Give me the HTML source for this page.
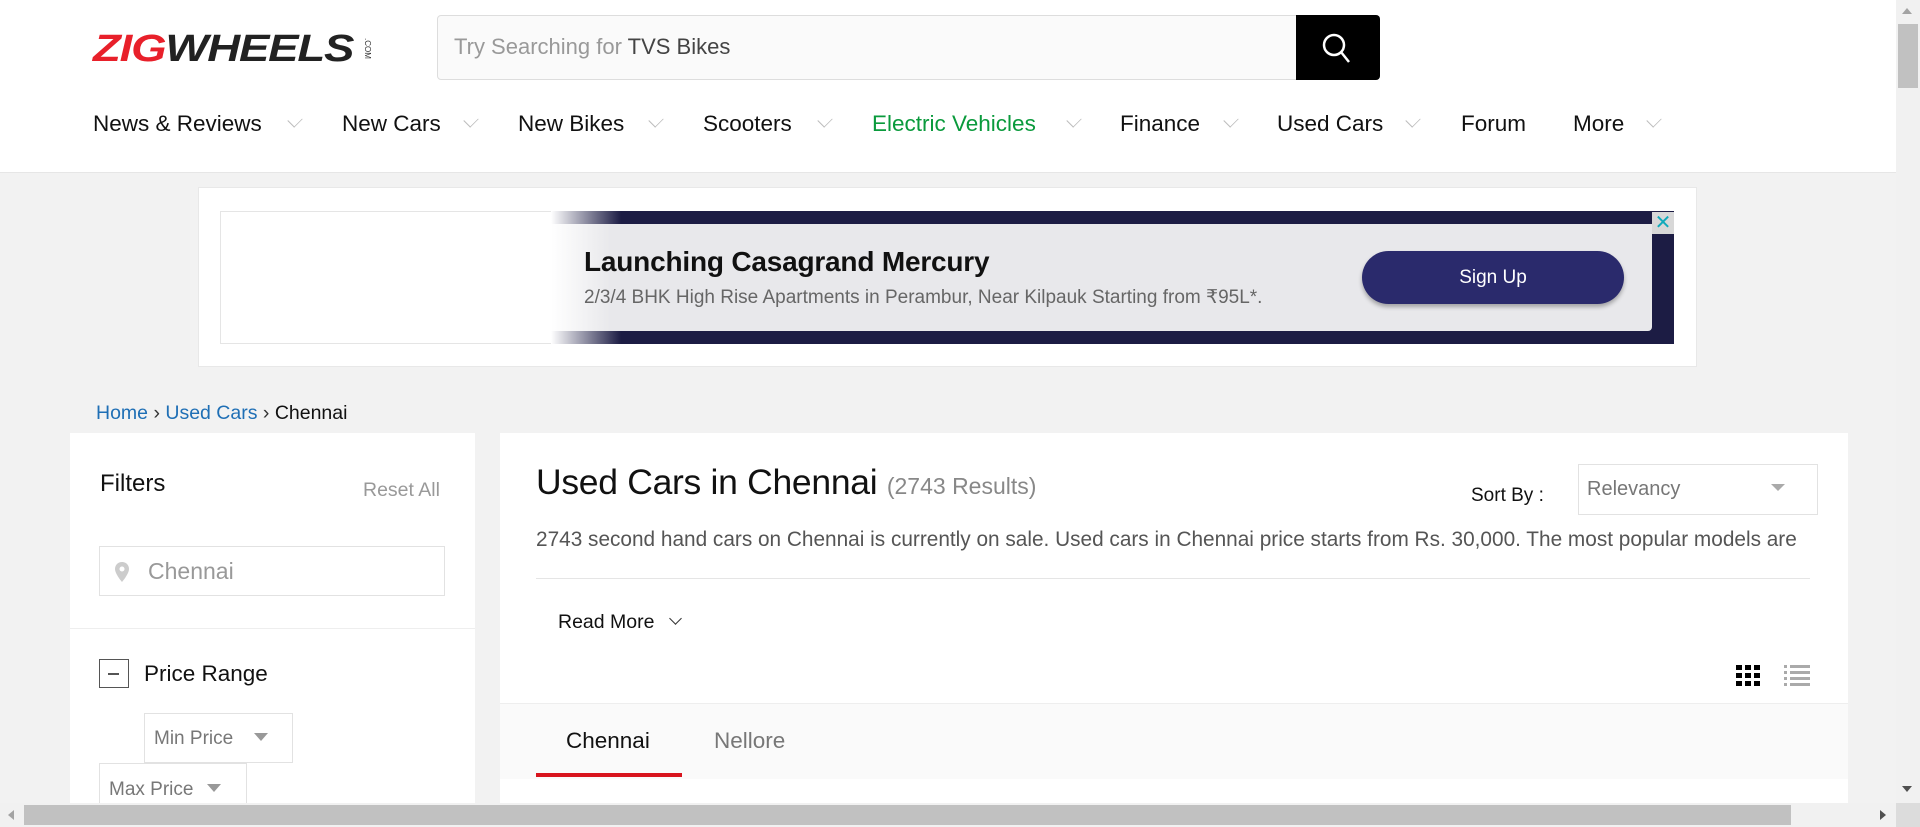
<!DOCTYPE html>
<html><head><meta charset="utf-8"><style>
*{margin:0;padding:0;box-sizing:border-box}
body{width:1920px;height:827px;overflow:hidden;background:#f2f2f2;font-family:"Liberation Sans",Arial,sans-serif;position:relative;color:#000}
.a{position:absolute;white-space:nowrap}
.hdr{position:absolute;left:0;top:0;width:1896px;height:173px;background:#fff;border-bottom:1px solid #e6e6e6}
.nav{font-size:22.5px;color:#111;top:111px}
.chev{position:absolute;top:114px;width:12px;height:12px;border-right:1.5px solid #bbb;border-bottom:1.5px solid #bbb;transform:rotate(45deg) scaleX(.8)}
</style></head><body>
<div class="hdr"></div>
<!-- logo -->
<div class="a" style="left:93px;top:28px;font-size:38px;font-weight:bold;font-style:italic;letter-spacing:-1px;transform:scaleX(1.2);transform-origin:left"><span style="color:#e8202a">ZIG</span><span style="color:#222">WHEELS</span></div>
<div class="a" style="left:372px;top:38px;font-size:8px;color:#333;transform:rotate(90deg);transform-origin:left top">.COM</div>
<!-- search -->
<div class="a" style="left:437px;top:15px;width:943px;height:65px;background:#fafafa;border:1px solid #ddd;border-radius:4px"></div>
<div class="a" style="left:454px;top:34px;font-size:22px;color:#999">Try Searching for <span style="color:#444">TVS Bikes</span></div>
<div class="a" style="left:1296px;top:15px;width:84px;height:65px;background:#000;border-radius:0 4px 4px 0"></div>
<svg class="a" style="left:1318px;top:29px" width="38" height="38" viewBox="0 0 38 38"><circle cx="16" cy="16" r="10" stroke="#fff" stroke-width="2.5" fill="none"/><line x1="23" y1="23" x2="31" y2="33" stroke="#fff" stroke-width="2.5"/></svg>
<!-- nav -->
<div class="a nav" style="left:93px">News &amp; Reviews</div><div class="chev" style="left:289px"></div>
<div class="a nav" style="left:342px">New Cars</div><div class="chev" style="left:465px"></div>
<div class="a nav" style="left:518px">New Bikes</div><div class="chev" style="left:650px"></div>
<div class="a nav" style="left:703px">Scooters</div><div class="chev" style="left:819px"></div>
<div class="a nav" style="left:872px;color:#0a9a3c">Electric Vehicles</div><div class="chev" style="left:1068px"></div>
<div class="a nav" style="left:1120px">Finance</div><div class="chev" style="left:1225px"></div>
<div class="a nav" style="left:1277px">Used Cars</div><div class="chev" style="left:1407px"></div>
<div class="a nav" style="left:1461px">Forum</div>
<div class="a nav" style="left:1573px">More</div><div class="chev" style="left:1648px"></div>
<!-- ad -->
<div class="a" style="left:198px;top:187px;width:1499px;height:180px;background:#fff;border:1px solid #e8e8e8"></div>
<div class="a" style="left:220px;top:211px;width:1454px;height:133px;background:#fff;border:1px solid #e5e5e5"></div>
<div class="a" style="left:551px;top:211px;width:1123px;height:133px;background:linear-gradient(90deg,#fff 0,#1c1c44 70px,#1c1c44 100%)"></div>
<div class="a" style="left:551px;top:224px;width:1101px;height:107px;background:linear-gradient(90deg,#fff 0,#e8e8eb 60px);border-radius:0 0 4px 0"></div>
<div class="a" style="left:1652px;top:212px;width:22px;height:22px;background:#d8d8d8;color:#1ab;font-size:20px;text-align:center;line-height:22px">✕</div>
<div class="a" style="left:584px;top:246px;font-size:28px;font-weight:bold;color:#111;letter-spacing:-.2px">Launching Casagrand Mercury</div>
<div class="a" style="left:584px;top:286px;font-size:19px;color:#666">2/3/4 BHK High Rise Apartments in Perambur, Near Kilpauk Starting from ₹95L*.</div>
<div class="a" style="left:1362px;top:251px;width:262px;height:53px;background:#2a2a6c;border-radius:27px;color:#fff;font-size:19px;text-align:center;line-height:53px;box-shadow:0 3px 4px rgba(0,0,0,.3)">Sign Up</div>
<!-- breadcrumb -->
<div class="a" style="left:96px;top:402px;font-size:19.5px;color:#1f6fb5">Home <span style="color:#333">›</span> Used Cars <span style="color:#333">›</span> <span style="color:#111">Chennai</span></div>
<!-- left panel -->
<div class="a" style="left:70px;top:433px;width:405px;height:370px;background:#fff"></div>
<div class="a" style="left:100px;top:470px;font-size:24px;color:#111">Filters</div>
<div class="a" style="left:363px;top:479px;font-size:19.5px;color:#999">Reset All</div>
<div class="a" style="left:99px;top:546px;width:346px;height:50px;border:1px solid #e2e2e2"></div>
<svg class="a" style="left:114px;top:561px" width="16" height="22" viewBox="0 0 16 22"><path d="M8 1C4 1 1 4 1 8c0 5 7 13 7 13s7-8 7-13c0-4-3-7-7-7z" fill="#ccc"/><circle cx="8" cy="8" r="2.5" fill="#fff"/></svg>
<div class="a" style="left:148px;top:558px;font-size:23px;color:#999">Chennai</div>
<div class="a" style="left:70px;top:628px;width:405px;height:1px;background:#eee"></div>
<div class="a" style="left:99px;top:659px;width:30px;height:29px;border:1.5px solid #555"></div>
<div class="a" style="left:108px;top:673px;width:11px;height:1.5px;background:#555"></div>
<div class="a" style="left:144px;top:661px;font-size:22.5px;color:#111">Price Range</div>
<div class="a" style="left:144px;top:713px;width:149px;height:50px;border:1px solid #e2e2e2"></div>
<div class="a" style="left:154px;top:728px;font-size:19px;color:#777">Min Price</div>
<div class="a" style="left:254px;top:733px;border:7px solid transparent;border-top:8px solid #999"></div>
<div class="a" style="left:99px;top:763px;width:148px;height:45px;border:1px solid #e2e2e2;border-bottom:none"></div>
<div class="a" style="left:109px;top:779px;font-size:19px;color:#777">Max Price</div>
<div class="a" style="left:207px;top:784px;border:7px solid transparent;border-top:8px solid #999"></div>
<!-- right panel -->
<div class="a" style="left:500px;top:433px;width:1348px;height:370px;background:#fff"></div>
<div class="a" style="left:536px;top:462px;font-size:35.5px;color:#111;letter-spacing:-.3px">Used Cars in Chennai <span style="font-size:23px;color:#888;letter-spacing:0">(2743 Results)</span></div>
<div class="a" style="left:1471px;top:485px;font-size:19px;color:#111">Sort By :</div>
<div class="a" style="left:1578px;top:464px;width:240px;height:51px;border:1px solid #e2e2e2"></div>
<div class="a" style="left:1587px;top:478px;font-size:20px;color:#777">Relevancy</div>
<div class="a" style="left:1771px;top:484px;border:7px solid transparent;border-top:7px solid #aaa"></div>
<div class="a" style="left:536px;top:528px;font-size:20.8px;color:#555">2743 second hand cars on Chennai is currently on sale. Used cars in Chennai price starts from Rs. 30,000. The most popular models are</div>
<div class="a" style="left:536px;top:578px;width:1274px;height:1px;background:#e5e5e5"></div>
<div class="a" style="left:558px;top:611px;font-size:19.5px;color:#111">Read More</div>
<div class="a" style="left:671px;top:614px;width:9px;height:9px;border-right:1.5px solid #333;border-bottom:1.5px solid #333;transform:rotate(45deg)"></div>
<svg class="a" style="left:1736px;top:665px" width="24" height="22" viewBox="0 0 24 22"><g fill="#000"><rect x="0" y="0" width="6" height="5"/><rect x="9" y="0" width="6" height="5"/><rect x="18" y="0" width="6" height="5"/><rect x="0" y="8" width="6" height="5"/><rect x="9" y="8" width="6" height="5"/><rect x="18" y="8" width="6" height="5"/><rect x="0" y="16" width="6" height="5"/><rect x="9" y="16" width="6" height="5"/><rect x="18" y="16" width="6" height="5"/></g></svg>
<svg class="a" style="left:1784px;top:665px" width="26" height="22" viewBox="0 0 26 22"><g fill="#aaa"><rect x="0" y="0" width="3" height="3"/><rect x="6" y="0" width="20" height="3"/><rect x="0" y="6" width="3" height="3"/><rect x="6" y="6" width="20" height="3"/><rect x="0" y="12" width="3" height="3"/><rect x="6" y="12" width="20" height="3"/><rect x="0" y="18" width="3" height="3"/><rect x="6" y="18" width="20" height="3"/></g></svg>
<div class="a" style="left:500px;top:703px;width:1348px;height:76px;background:#fafafa;border-top:1px solid #eee"></div>
<div class="a" style="left:566px;top:728px;font-size:22.5px;color:#111">Chennai</div>
<div class="a" style="left:714px;top:728px;font-size:22.5px;color:#777">Nellore</div>
<div class="a" style="left:536px;top:773px;width:146px;height:4px;background:#d8141e"></div>
<!-- scrollbars -->
<div class="a" style="left:1896px;top:0;width:24px;height:803px;background:#f1f1f1"></div>
<div class="a" style="left:1898px;top:24px;width:20px;height:64px;background:#c1c1c1"></div>
<div class="a" style="left:1902px;top:8px;border:5px solid transparent;border-bottom:6px solid #a3a3a3;border-top:none"></div>
<div class="a" style="left:1902px;top:786px;border:5px solid transparent;border-top:6px solid #505050;border-bottom:none"></div>
<div class="a" style="left:0;top:803px;width:1896px;height:24px;background:#f1f1f1"></div>
<div class="a" style="left:24px;top:805px;width:1767px;height:20px;background:#c1c1c1"></div>
<div class="a" style="left:8px;top:810px;border:5px solid transparent;border-right:6px solid #a3a3a3;border-left:none"></div>
<div class="a" style="left:1880px;top:810px;border:5px solid transparent;border-left:6px solid #505050;border-right:none"></div>
<div class="a" style="left:1896px;top:803px;width:24px;height:24px;background:#dcdcdc"></div>
</body></html>
